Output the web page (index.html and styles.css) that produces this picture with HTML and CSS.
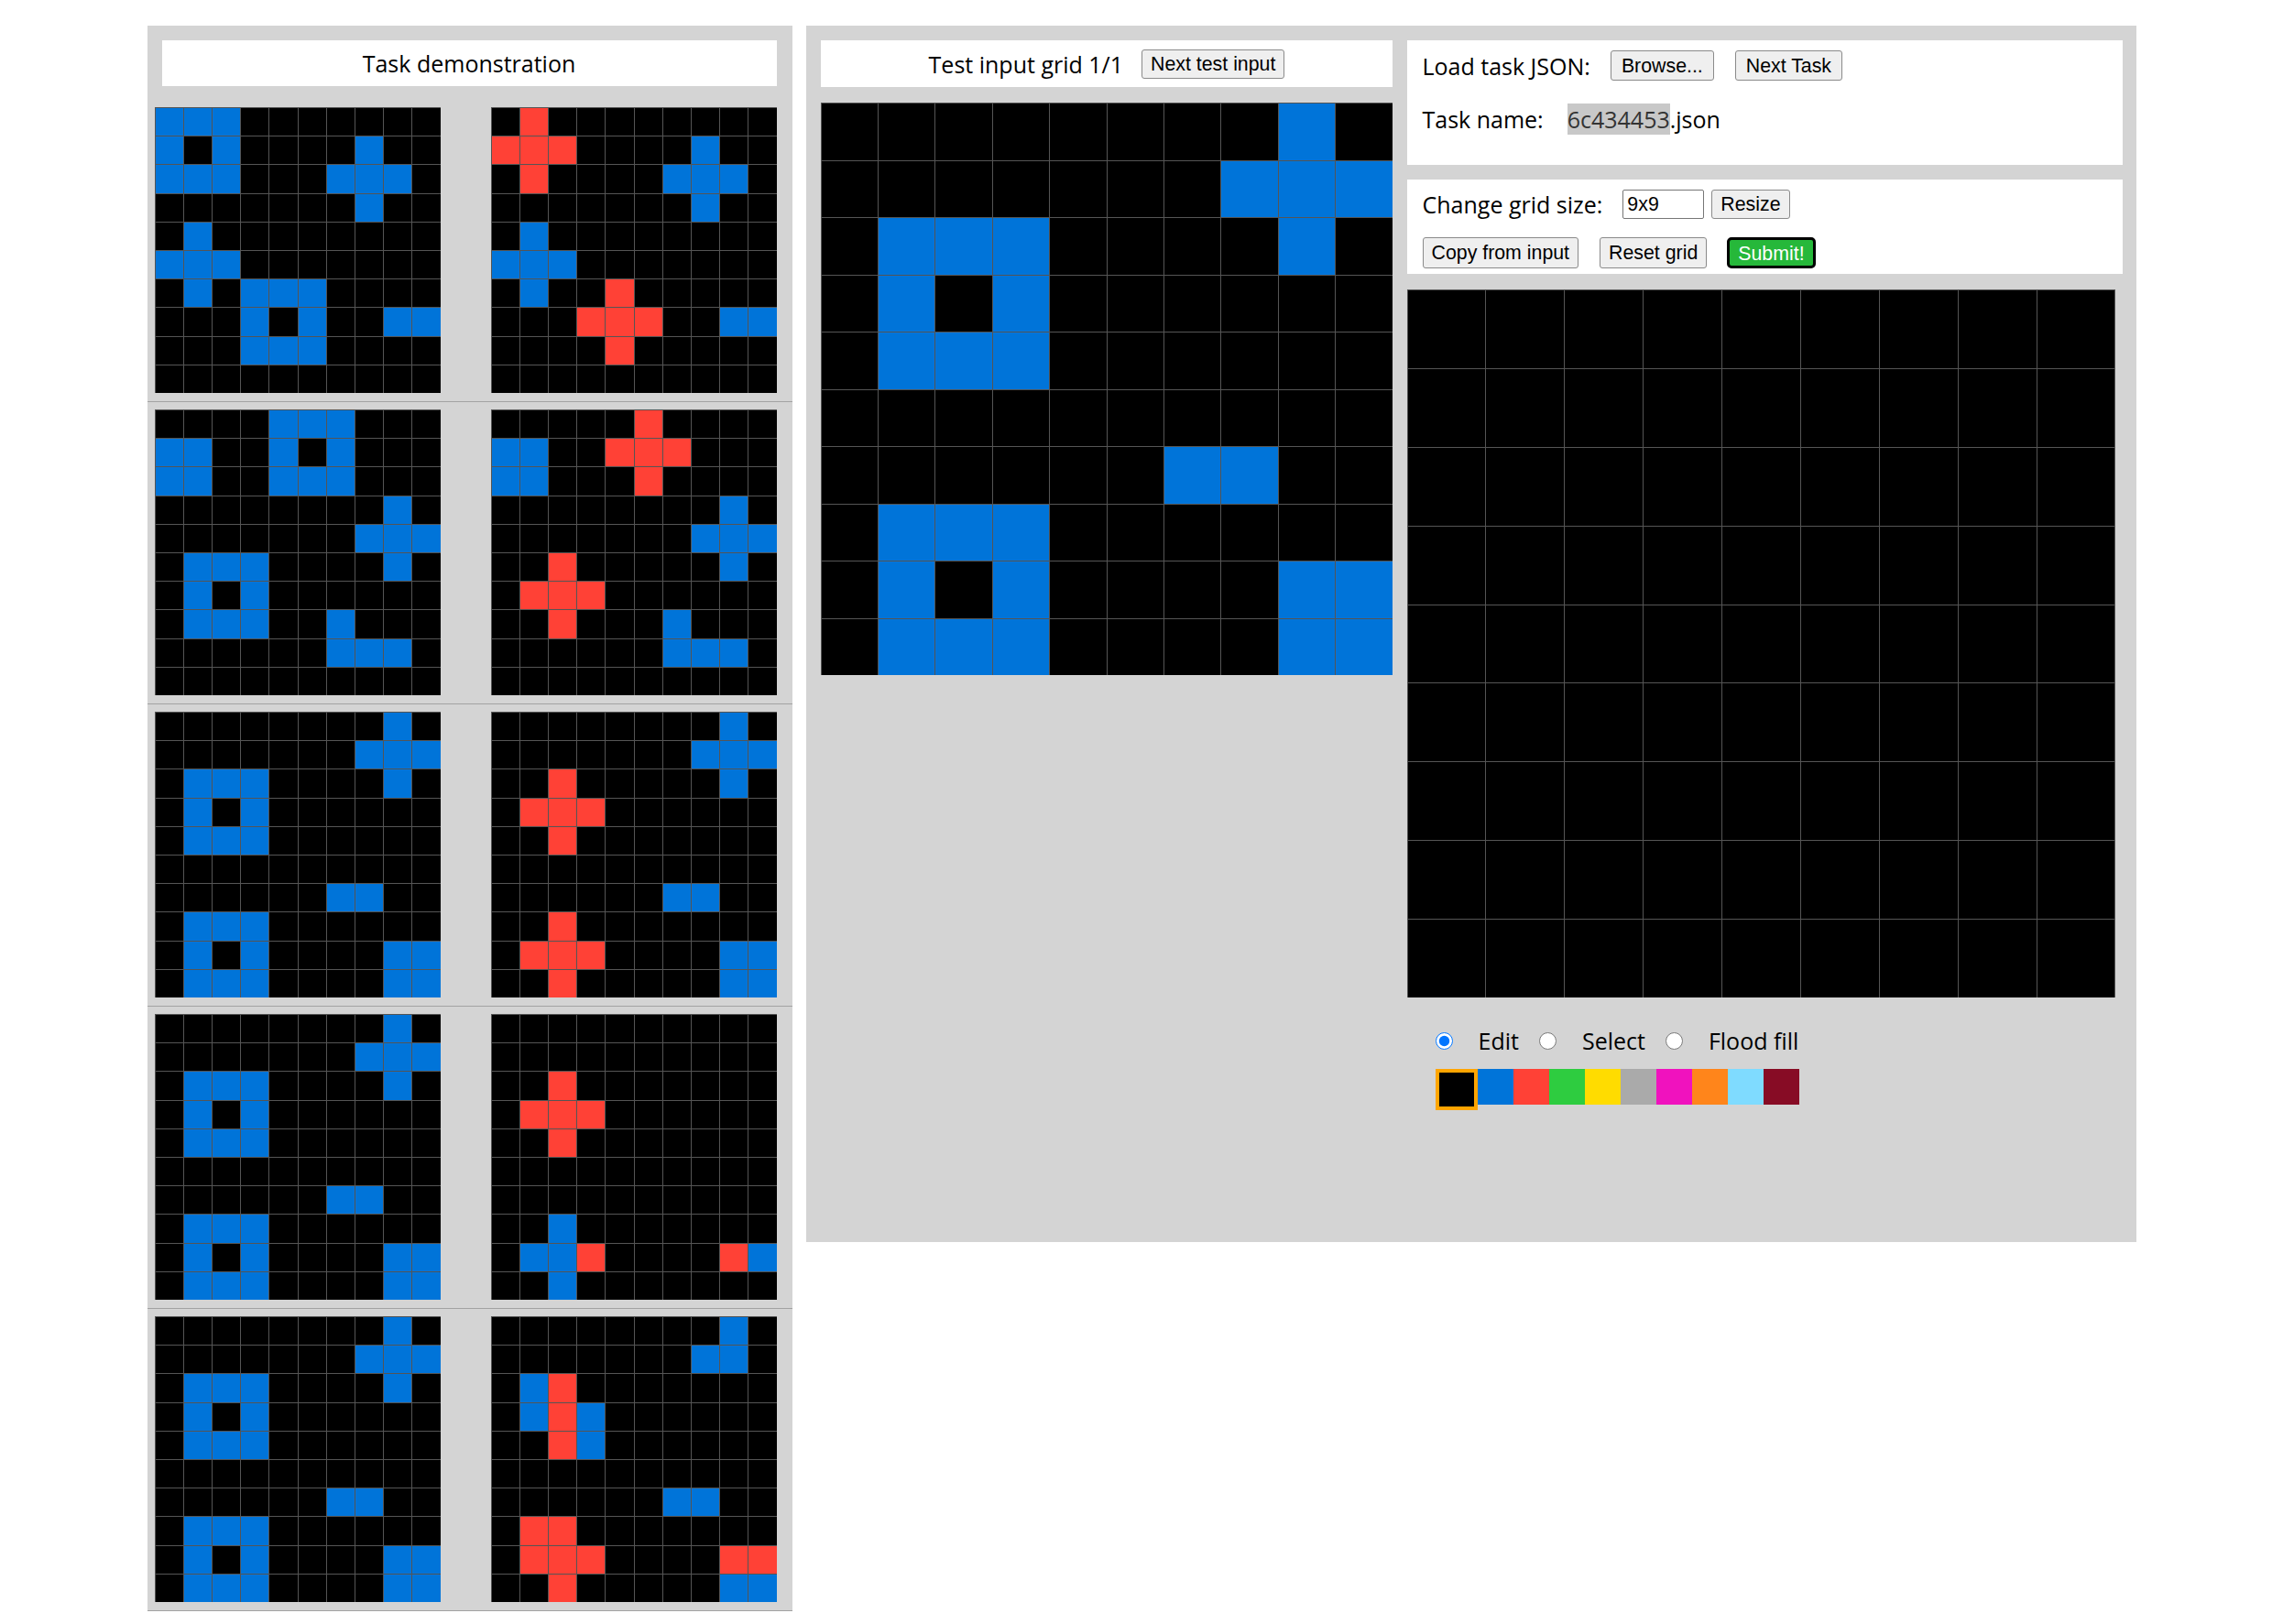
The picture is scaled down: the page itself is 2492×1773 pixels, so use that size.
FILE: index.html
```html
<!DOCTYPE html>
<html>
<head>
<meta charset="utf-8">
<title>ARC testing interface</title>
<link rel="stylesheet" href="styles.css">
<script src="script.js" defer></script>
</head>
<body>
<div class="page">
  <div class="demo-panel">
    <div class="demo-header">Task demonstration</div>
    <div id="pairs"></div>
  </div>
  <div class="work-panel">
    <div class="test-col">
      <div class="test-header">
        <span>Test input grid 1/1</span>
        <button class="btn">Next test input</button>
      </div>
      <div id="test-grid" class="grid g10 test-grid"></div>
    </div>
    <div class="out-col">
      <div class="box box-load">
        <div class="row row-load">
          <span class="lbl">Load task JSON:</span>
          <button class="btn btn-browse">Browse...</button>
          <button class="btn btn-next">Next Task</button>
        </div>
        <div class="row row-name">
          <span class="lbl">Task name:</span>
          <span class="fname"><span class="hl">6c434453</span>.json</span>
        </div>
      </div>
      <div class="box box-edit">
        <div class="row row-size">
          <span class="lbl">Change grid size:</span>
          <input class="size-input" type="text" value="9x9">
          <button class="btn btn-resize">Resize</button>
        </div>
        <div class="row row-actions">
          <button class="btn">Copy from input</button>
          <button class="btn btn-reset">Reset grid</button>
          <button class="btn btn-submit">Submit!</button>
        </div>
      </div>
      <div id="out-grid" class="grid g9 out-grid"></div>
      <div class="tools">
        <input type="radio" name="tool" class="radio" checked>
        <label class="tool-lbl">Edit</label>
        <input type="radio" name="tool" class="radio">
        <label class="tool-lbl">Select</label>
        <input type="radio" name="tool" class="radio">
        <label class="tool-lbl">Flood fill</label>
      </div>
      <div class="palette">
        <div class="sw c0 sel"></div>
        <div class="sw c1"></div>
        <div class="sw c2"></div>
        <div class="sw c3"></div>
        <div class="sw c4"></div>
        <div class="sw c5"></div>
        <div class="sw c6"></div>
        <div class="sw c7"></div>
        <div class="sw c8"></div>
        <div class="sw c9"></div>
      </div>
    </div>
  </div>
</div>
</body>
</html>
```

FILE: styles.css
```css
* { box-sizing: border-box; }
body {
  margin: 0;
  font-family: "Open Sans", "Noto Sans", sans-serif;
  font-size: 25px;
  color: #000;
  background: #fff;
}
.page {
  display: flex;
  justify-content: center;
  align-items: flex-start;
  gap: 15px;
  padding-top: 28px;
}
.demo-panel {
  width: 704px;
  background: #d4d4d4;
}
.demo-header {
  margin: 16px 17px 0 16px;
  height: 50px;
  background: #fff;
  display: flex;
  align-items: center;
  justify-content: center;
}
#pairs { margin-top: 15px; }
.pair {
  display: flex;
  gap: 55px;
  padding: 8px 17px 9px 8px;
  border-bottom: 1px solid #a2a2a2;
}
.pair .grid { width: 312px; height: 312px; }

.grid {
  display: grid;
  gap: 1px;
  padding: 1px 0 0 1px;
  background: #555;
}
.g10 { grid-template-columns: repeat(10, 1fr); grid-template-rows: repeat(10, 1fr); }
.g9 { grid-template-columns: repeat(9, 1fr); grid-template-rows: repeat(9, 1fr); }

.c0 { background: #000000; }
.c1 { background: #0074D9; }
.c2 { background: #FF4136; }
.c3 { background: #2ECC40; }
.c4 { background: #FFDC00; }
.c5 { background: #AAAAAA; }
.c6 { background: #F012BE; }
.c7 { background: #FF851B; }
.c8 { background: #7FDBFF; }
.c9 { background: #870C25; }

.work-panel {
  width: 1452px;
  height: 1328px;
  background: #d4d4d4;
  display: flex;
  gap: 16px;
  padding: 16px 15px 0 16px;
}
.test-col { width: 624px; }
.test-header {
  height: 51px;
  background: #fff;
  display: flex;
  align-items: center;
  justify-content: center;
  gap: 20px;
  padding-left: 1px;
}
.test-grid {
  margin-top: 17px;
  width: 624px;
  height: 625px;
}

.btn {
  font-family: "Liberation Sans", Arial, sans-serif;
  font-size: 21.33px;
  color: #000;
  background: #efefef;
  border: 1px solid #8a8a8a;
  border-radius: 3px;
  padding: 0 9px;
  height: 32px;
  line-height: 30px;
}

.out-col { width: 781px; }
.box {
  background: #fff;
  padding: 0 17px;
}
.box-load {
  height: 136px;
  padding-top: 11px;
}
.box-edit {
  height: 103px;
  margin-top: 16px;
  padding-top: 11px;
}
.row {
  display: flex;
  align-items: center;
}
.row-load { height: 33px; }
.row-load .btn { height: 33px; }
.btn-browse { margin-left: 22px; padding: 0 11px; }
.btn-next { margin-left: 23px; padding: 0 11px; }
.row-name {
  height: 34px;
  margin-top: 25px;
}
.fname { margin-left: 26px; }
.hl {
  background: #c8c8c8;
  color: #333;
  display: inline-block;
  line-height: 34px;
}
.row-size { height: 32px; }
.size-input {
  margin-left: 22px;
  width: 89px;
  height: 32px;
  font-family: "Liberation Sans", Arial, sans-serif;
  font-size: 21.33px;
  border: 1px solid #767676;
  border-radius: 2px;
  padding: 0 4px;
  background: #fff;
}
.btn-resize { margin-left: 8px; }
.row-actions {
  height: 34px;
  margin-top: 20px;
}
.row-actions .btn { height: 34px; }
.btn-reset { margin-left: 23px; }
.btn-submit {
  margin-left: 22px;
  background: #26b83a;
  color: #fff;
  border: 3px solid #000;
  border-radius: 5px;
  padding: 0 9px;
}

.out-grid {
  margin-top: 17px;
  width: 773px;
  height: 773px;
}
.tools {
  display: flex;
  align-items: center;
  height: 34px;
  margin-top: 30px;
  padding-left: 31px;
}
.radio {
  width: 19px;
  height: 19px;
  margin: 0;
}
.tool-lbl { margin-left: 28px; margin-right: 22px; }
.palette {
  display: flex;
  align-items: flex-start;
  margin-top: 14px;
  padding-left: 31px;
}
.sw {
  width: 39px;
  height: 39px;
}
.sw.sel {
  width: 46px;
  height: 45px;
  border: 4px solid #FFA500;
}
```

FILE: script.js
```js
(function () {
  var A = [
    "0000000010",
    "0000000111",
    "0111000010",
    "0101000000",
    "0111000000",
    "0000000000",
    "0000001100",
    "0111000000",
    "0101000011",
    "0111000011"
  ];
  var pairs = [
    [[
      "1110000000",
      "1010000100",
      "1110001110",
      "0000000100",
      "0100000000",
      "1110000000",
      "0101110000",
      "0001010011",
      "0001110000",
      "0000000000"
    ], [
      "0200000000",
      "2220000100",
      "0200001110",
      "0000000100",
      "0100000000",
      "1110000000",
      "0100200000",
      "0002220011",
      "0000200000",
      "0000000000"
    ]],
    [[
      "0000111000",
      "1100101000",
      "1100111000",
      "0000000010",
      "0000000111",
      "0111000010",
      "0101000000",
      "0111001000",
      "0000001110",
      "0000000000"
    ], [
      "0000020000",
      "1100222000",
      "1100020000",
      "0000000010",
      "0000000111",
      "0020000010",
      "0222000000",
      "0020001000",
      "0000001110",
      "0000000000"
    ]],
    [A, [
      "0000000010",
      "0000000111",
      "0020000010",
      "0222000000",
      "0020000000",
      "0000000000",
      "0000001100",
      "0020000000",
      "0222000011",
      "0020000011"
    ]],
    [A, [
      "0000000000",
      "0000000000",
      "0020000000",
      "0222000000",
      "0020000000",
      "0000000000",
      "0000000000",
      "0010000000",
      "0112000021",
      "0010000000"
    ]],
    [A, [
      "0000000010",
      "0000000110",
      "0120000000",
      "0121000000",
      "0021000000",
      "0000000000",
      "0000001100",
      "0220000000",
      "0222000022",
      "0020000011"
    ]]
  ];

  function fill(el, rows) {
    rows.forEach(function (r) {
      for (var i = 0; i < r.length; i++) {
        var d = document.createElement("div");
        d.className = "c" + r[i];
        el.appendChild(d);
      }
    });
  }
  function makeGrid(rows) {
    var g = document.createElement("div");
    g.className = "grid g10";
    fill(g, rows);
    return g;
  }

  var host = document.getElementById("pairs");
  pairs.forEach(function (p) {
    var row = document.createElement("div");
    row.className = "pair";
    row.appendChild(makeGrid(p[0]));
    row.appendChild(makeGrid(p[1]));
    host.appendChild(row);
  });

  fill(document.getElementById("test-grid"), A);

  var blank = [];
  for (var i = 0; i < 9; i++) blank.push("000000000");
  fill(document.getElementById("out-grid"), blank);
})();
```
